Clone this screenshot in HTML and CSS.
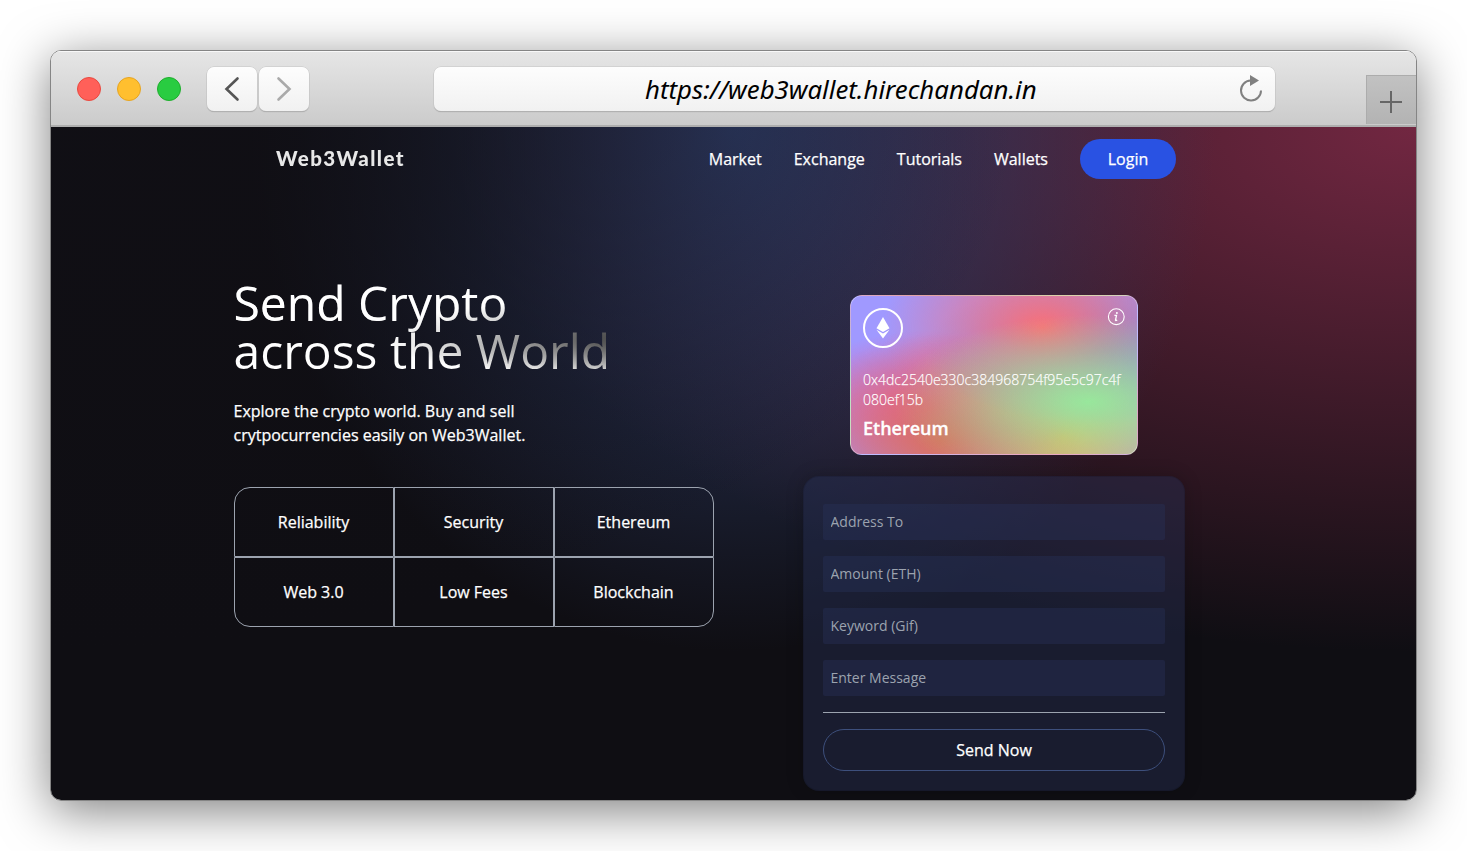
FILE: index.html
```html
<!DOCTYPE html>
<html lang="en">
<head>
<meta charset="utf-8">
<title>Web3Wallet</title>
<link rel="stylesheet" href="styles.css">
</head>
<body>
<div class="window">
  <div class="toolbar">
    <div class="lights"><span class="light red"></span><span class="light yellow"></span><span class="light green"></span></div>
    <div class="history">
      <span class="tool-btn"><svg width="50" height="44" viewBox="0 0 50 44"><path d="M30.5 11.5 19.5 22 30.5 32.5" fill="none" stroke="#555" stroke-width="2.6" stroke-linecap="round"/></svg></span>
      <span class="tool-btn"><svg width="50" height="44" viewBox="0 0 50 44"><path d="M19.5 11.5 30.5 22 19.5 32.5" fill="none" stroke="#aaa" stroke-width="2.6" stroke-linecap="round"/></svg></span>
    </div>
    <div class="address">
      <span class="url">https://web3wallet.hirechandan.in</span>
      <svg class="reload" width="26" height="28" viewBox="0 0 26 28"><path d="M12.5 5.5A10 10 0 1 0 23 15.5" fill="none" stroke="#808080" stroke-width="2"/><path d="M12 0v11l9-5.5z" fill="#808080"/></svg>
    </div>
    <div class="new-tab"><svg width="50" height="49" viewBox="0 0 50 49"><path d="M14 27H36M25 16V38" stroke="#666" stroke-width="2"/></svg></div>
  </div>
  <div class="page">
    <div class="page-bg">
      <nav class="nav">
        <span class="logo">Web3Wallet</span>
        <ul class="links"><li>Market</li><li>Exchange</li><li>Tutorials</li><li>Wallets</li><li class="login">Login</li></ul>
      </nav>
      <main class="hero">
        <section class="intro">
          <h1>Send Crypto<br>across the World</h1>
          <p>Explore the crypto world. Buy and sell<br>crytpocurrencies easily on Web3Wallet.</p>
          <div class="features">
            <div class="tl">Reliability</div><div>Security</div><div class="tr">Ethereum</div>
            <div class="bl">Web 3.0</div><div>Low Fees</div><div class="br">Blockchain</div>
          </div>
        </section>
        <section class="side">
          <div class="card">
            <div class="card-top">
              <span class="eth"><svg width="14" height="22" viewBox="0 0 14 22" fill="#fff"><path d="M7 0 .5 11.3 7 15 13.5 11.3z"/><path d="M.5 12.7 7 16.5l6.5-3.8L7 21.5z"/></svg></span>
              <svg class="info" width="18" height="18" viewBox="0 0 18 18" fill="none" stroke="#fff"><circle cx="9.3" cy="8.7" r="7.9" stroke-width="1.1"/><path d="M7.4 7.4h2.1L8.5 12.1q-.1 1 1.7.1" stroke-width="1.3"/><circle cx="9.9" cy="4.9" r="1" fill="#fff" stroke="none"/></svg>
            </div>
            <div class="card-bottom">
              <p class="hash">0x4dc2540e330c384968754f95e5c97c4f<br>080ef15b</p>
              <p class="coin">Ethereum</p>
            </div>
          </div>
          <form class="form">
            <input placeholder="Address To">
            <input placeholder="Amount (ETH)">
            <input placeholder="Keyword (Gif)">
            <input placeholder="Enter Message">
            <div class="rule"></div>
            <button type="button">Send Now</button>
          </form>
        </section>
      </main>
    </div>
  </div>
</div>
</body>
</html>
```
FILE: styles.css
```css
* { box-sizing: border-box; }
body {
  margin: 0; height: 851px; padding: 50px; overflow: hidden;
  background: #fff; color: #fff;
  font-family: "Open Sans", "Noto Sans", sans-serif; font-size: 16px; line-height: 24px;
}
h1, p, ul { margin: 0; padding: 0; font-weight: 400; list-style: none; }
svg { display: block; }
.window {
  width: 1367px; height: 751px; border: 1px solid #858585; border-radius: 11px;
  overflow: hidden; box-shadow: 0 10px 50px rgba(0,0,0,.5);
}
.toolbar {
  display: flex; align-items: flex-start; height: 76px; padding-left: 26px;
  background: linear-gradient(#e6e6e6, #cbcbcb);
  border-bottom: 2px solid #aeaeae;
  box-shadow: inset 0 1px #f8f8f8;
}
.lights { display: flex; gap: 16px; padding-top: 26px; }
.light { width: 24px; height: 24px; border-radius: 50%; border: 1px solid; }
.red { background: #ff6059; border-color: #e9493f; }
.yellow { background: #ffbf2f; border-color: #e6a421; }
.green { background: #29cc41; border-color: #1eae2c; }
.history { display: flex; gap: 2px; margin: 16px 0 0 26px; }
.tool-btn, .address {
  background: linear-gradient(#fdfdfd, #f1f1f1); border-radius: 7px;
  box-shadow: 0 0 0 .5px #c4c4c4, 0 1px 1px #999;
}
.tool-btn { width: 50px; height: 44px; }
.address {
  position: relative; width: 841px; height: 44px; margin: 16px 0 0 125px;
}
.url {
  display: block; padding-left: 211px; line-height: 44px;
  color: #000; font-size: 25.8px; font-style: italic; font-family: "Noto Sans", sans-serif;
}
.reload { position: absolute; left: 804px; top: 8px; }
.new-tab {
  width: 50px; height: 49px; margin: 24px 0 0 auto;
  background: linear-gradient(#c2c2c2, #b3b3b3);
  box-shadow: inset 1px 1px #acacac;
}
.page { height: 673px; overflow: hidden; }
.page-bg {
  height: 742px; background-color: #0f0e13;
  background-image:
    radial-gradient(at 0% 0%, hsl(253,16%,7%) 0, transparent 50%),
    radial-gradient(at 50% 0%, hsl(225,39%,30%) 0, transparent 50%),
    radial-gradient(at 100% 0%, hsl(339,49%,30%) 0, transparent 50%);
}
.nav { display: flex; justify-content: space-between; align-items: center; padding: 12px 240px 0 225px; }
.logo { font: 900 20.5px/24px Lato, sans-serif; letter-spacing: 1.4px; color: #e8e8e8; filter: blur(.4px); margin-top: -3px; }
.links { display: flex; align-items: center; gap: 32px; -webkit-text-stroke: .25px #fff; }
.login { width: 96px; height: 40px; line-height: 40px; text-align: center; border-radius: 20px; background: #2952e3; }
.hero { display: flex; padding-left: 183px; }
.intro { width: 480px; padding-top: 100px; }
h1 {
  margin-left: -.5px; font-size: 48px; line-height: 48px; padding-bottom: 4px;
  color: transparent; background-color: #fff;
  background-image:
    radial-gradient(at 4% 36%, #fff 0, transparent 53%),
    radial-gradient(339px 43px at 480px 59px, #000 0, transparent 100%);
  -webkit-background-clip: text; background-clip: text;
}
.intro p { margin: 20px 0 0 -.5px; -webkit-text-stroke: .25px #fff; }
.features { display: grid; grid-template-columns: repeat(3, 160px); grid-auto-rows: 70px; margin-top: 40px; -webkit-text-stroke: .25px #fff; }
.features div { display: flex; align-items: center; justify-content: center; padding-right: 1px; border: 1px solid #9ca3af; }
.tl { border-top-left-radius: 16px; }
.tr { border-top-right-radius: 16px; }
.bl { border-bottom-left-radius: 16px; }
.br { border-bottom-right-radius: 16px; }
.side { display: flex; flex-direction: column; align-items: center; width: 382px; margin-left: 89px; padding-top: 116px; }
.card {
  display: flex; flex-direction: column; justify-content: space-between;
  width: 288px; height: 160px; padding: 12px; border-radius: 12px;
  border: 1px solid rgba(255,255,255,.35);
  background-color: #a099ff;
  background-image:
    radial-gradient(at 83% 67%, rgb(152,231,156) 0, transparent 58%),
    radial-gradient(at 67% 20%, hsl(357,94%,71%) 0, transparent 59%),
    radial-gradient(at 88% 35%, hsl(222,81%,65%) 0, transparent 50%),
    radial-gradient(at 31% 91%, hsl(9,61%,61%) 0, transparent 52%),
    radial-gradient(at 27% 71%, hsl(336,91%,65%) 0, transparent 49%),
    radial-gradient(at 74% 89%, hsl(30,98%,65%) 0, transparent 51%),
    radial-gradient(at 53% 75%, hsl(174,94%,68%) 0, transparent 45%);
}
.card-top { display: flex; justify-content: space-between; }
.eth { display: flex; align-items: center; justify-content: center; width: 40px; height: 40px; border: 2px solid #fff; border-radius: 50%; }
.hash { font-size: 14px; line-height: 20px; font-weight: 300; white-space: nowrap; -webkit-text-stroke: .25px rgba(255,255,255,.8); }
.coin { font-size: 18px; line-height: 28px; font-weight: 600; margin-top: 4px; -webkit-text-stroke: .3px #fff; }
.form {
  display: flex; flex-direction: column; gap: 16px; width: 382px; height: 315px; margin-top: 21px;
  padding: 27px 19px 19px; border: 1px solid rgba(0,0,0,.1); border-radius: 16px;
  background: rgba(39,51,89,.4); box-shadow: 0 0 18px rgba(0,0,0,.2);
}
input {
  height: 36px; flex: none; padding: 0 8px 2px 7.5px; border: 0; border-radius: 2px;
  background: rgba(40,50,91,.4); font: 14px "Open Sans", sans-serif; color: #fff;
}
input::placeholder { color: #9ca3af; }
.rule { height: 1px; flex: none; background: #9ca3af; }
button {
  height: 42px; flex: none; border: 1px solid #3d4f7c; border-radius: 21px; background: none;
  color: #fff; font: 16px "Open Sans", sans-serif; -webkit-text-stroke: .25px #fff;
}
```
